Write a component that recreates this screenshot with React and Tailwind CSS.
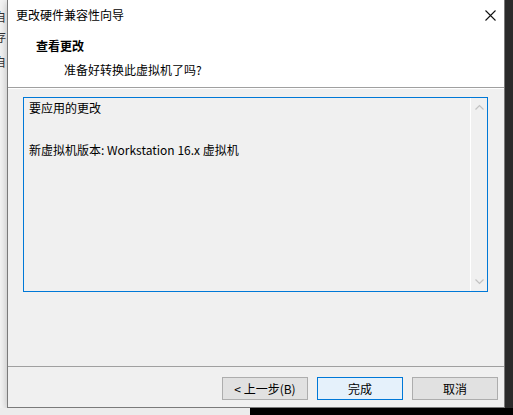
import React from 'react'

const font = { fontFamily: '"Noto Sans CJK SC", "Noto Sans", sans-serif' }

function Chevron({ up }) {
  return (
    <svg width="9" height="6" viewBox="0 0 9 6" className="text-[#c2c2c2]">
      <path d={up ? 'M0.5 5.5 L4.5 1.5 L8.5 5.5' : 'M0.5 0.5 L4.5 4.5 L8.5 0.5'} fill="none" stroke="currentColor" strokeWidth="1.2" />
    </svg>
  )
}

function Button({ children, primary }) {
  return (
    <button
      className={
        primary
          ? 'w-[86px] h-[23px] border border-[#0078d7] bg-[#e5f1fb] text-[12px] text-black'
          : 'w-[86px] h-[23px] border border-[#adadad] bg-[#e1e1e1] text-[12px] text-black'
      }
    >
      {children}
    </button>
  )
}

export default function App() {
  return (
    <div className="w-[513px] h-[415px] bg-[#262626] flex flex-col overflow-hidden" style={font}>
      <div className="flex h-[408px]">
        {/* window behind, clipped */}
        <div className="w-[7px] bg-[#f3f3f3] overflow-hidden text-[12px] text-[#333] leading-none">
          <div className="ml-[-6px] mt-[11px]">自</div>
          <div className="ml-[-6px] mt-[8px]">存</div>
          <div className="ml-[-6px] mt-[13px]">自</div>
        </div>

        {/* dialog */}
        <div className="w-[498px] border-l border-b border-r border-[#7a7a7a] bg-[#f0f0f0] flex flex-col shadow-[0_2px_8px_rgba(0,0,0,0.25)]">
          <div className="bg-white h-[87px] flex flex-col text-[12px] text-black">
            <div className="flex items-center justify-between h-[30px] pl-[8px] pr-[8px]">
              <span>更改硬件兼容性向导</span>
              <svg width="11" height="11" viewBox="0 0 11 11">
                <path d="M0.5 0.5 L10.5 10.5 M10.5 0.5 L0.5 10.5" stroke="#111" strokeWidth="1.1" />
              </svg>
            </div>
            <div className="pl-[28px] mt-[7px] font-bold leading-[18px]">查看更改</div>
            <div className="pl-[56px] mt-[6px] leading-[18px]">准备好转换此虚拟机了吗?</div>
          </div>
          <div className="h-px bg-[#a0a0a0]" />
          <div className="h-px bg-white" />

          <div className="flex-1 flex flex-col pt-[8px] pl-[15px] pr-[16px]">
            <div className="h-[195px] border border-[#0078d7] flex">
              <div className="flex-1 pl-[5px] pt-[1px] text-[12px] text-black leading-[18px]">
                <div>要应用的更改</div>
                <div className="mt-[24px]">新虚拟机版本: Workstation 16.x 虚拟机</div>
              </div>
              <div className="w-[17px] border-l border-white flex flex-col items-center justify-between py-[6px]">
                <Chevron up />
                <Chevron />
              </div>
            </div>
          </div>

          <div className="h-px bg-[#a0a0a0] mb-[10px]" />
          <div className="flex justify-end gap-[9px] pr-[6px] h-[30px]">
            <Button>&lt; 上一步(B)</Button>
            <Button primary>完成</Button>
            <Button>取消</Button>
          </div>
        </div>

        <div className="flex-1 bg-[#2b2b2b]" />
      </div>
      <div className="flex h-[7px]">
        <div className="w-[250px] bg-[#ececec]" />
        <div className="flex-1 bg-black" />
      </div>
    </div>
  )
}
